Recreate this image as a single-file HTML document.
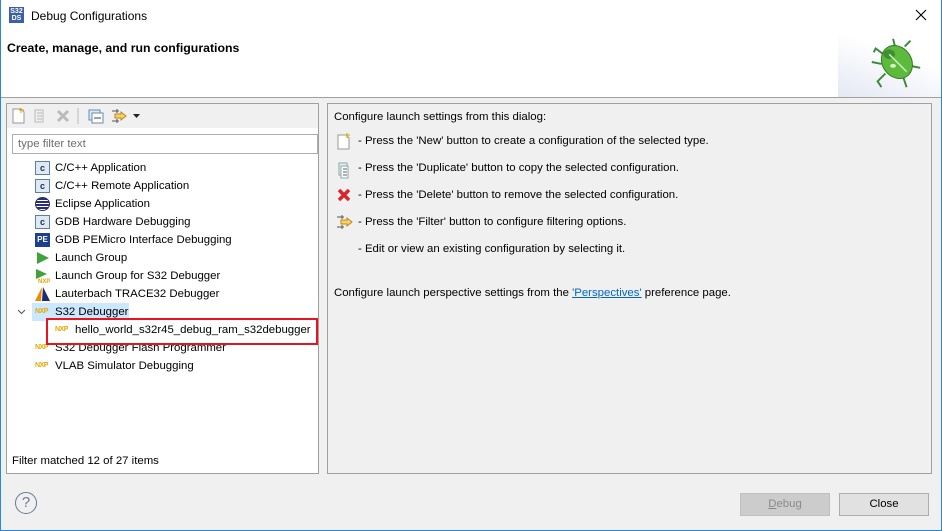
<!DOCTYPE html>
<html><head><style>
*{margin:0;padding:0;box-sizing:border-box}
body{width:942px;height:531px;overflow:hidden;background:#f0f0f0;font-family:"Liberation Sans",sans-serif;font-size:11.4px;color:#000;position:relative}
.a{position:absolute}
.win{position:absolute;left:0;top:0;width:942px;height:531px;border:1px solid #2b88d8;border-top:none}
.row{position:absolute;left:35px;height:18px;line-height:18px;white-space:nowrap}
.row .ic{position:absolute;left:0;top:2px;width:15px;height:14px}
.row span{position:absolute;left:20px}
.cic{border:1px solid #5b7fa6;background:#dfe9f5;font-size:9px;line-height:12px;text-align:center;color:#234;font-weight:bold}
.nxp{font-size:7px;font-weight:bold;color:#e8a800;line-height:14px;letter-spacing:-0.5px}
.btn{position:absolute;height:23px;border:1px solid #adadad;background:#e1e1e1;text-align:center;line-height:21px}
.t{position:absolute;white-space:nowrap}
</style></head><body>
<div class="a" style="left:0;top:0;width:942px;height:97px;background:#fff"></div>
<div class="a" style="left:0;top:97px;width:942px;height:1px;background:#a0a0a0"></div>
<div class="a" style="left:838px;top:25px;width:104px;height:72px;background:linear-gradient(200deg,#fff 40%,#e4e8f3 100%)"></div>
<div class="a" style="left:9px;top:7px;width:15px;height:16px;background:#3c5fa8;color:#fff;font-size:7px;line-height:7px;font-weight:bold;text-align:center;padding-top:1px">S32<br>DS</div>
<div class="t" style="left:31px;top:9px;font-size:12px">Debug Configurations</div>
<svg class="a" style="left:915px;top:9px" width="12" height="12"><path d="M1 1l10 10M11 1L1 11" stroke="#000" stroke-width="1.1"/></svg>
<div class="t" style="left:7px;top:41px;font-weight:bold;font-size:12.3px">Create, manage, and run configurations</div>
<svg class="a" style="left:866px;top:33px" width="58" height="58" viewBox="0 0 60 60">
<g stroke="#3a8a3a" stroke-width="2" fill="none"><path d="M18 22 L10 16 L8 20"/><path d="M16 32 L6 30"/><path d="M20 42 L12 50 L16 56"/><path d="M30 14 L28 6"/><path d="M40 14 L46 8"/><path d="M46 34 L56 36"/><path d="M38 44 L42 56"/></g>
<ellipse cx="32" cy="30" rx="15" ry="18" transform="rotate(-35 32 30)" fill="#5dba3c" stroke="#2f7a2a"/>
<ellipse cx="24" cy="22" rx="6" ry="5" fill="#3d8f30"/>
<path d="M24 22 L42 40" stroke="#cfeec0" stroke-width="1.5"/>
<ellipse cx="28" cy="34" rx="3" ry="2" fill="#d8f0c8"/>
</svg>
<div class="a" style="left:6px;top:103px;width:313px;height:371px;background:#fff;border:1px solid #a0a0a0"></div>
<div class="a" style="left:7px;top:104px;width:311px;height:24px;background:#f0f0f0"></div>
<svg class="a" style="left:11px;top:107px" width="135" height="18">
<path d="M2 2h8l3 3v11H2z" fill="#fff" stroke="#999"/><path d="M10 1v5M8 3h5" stroke="#d9a400"/>
<path d="M24 3h8v12h-8z" fill="#eee" stroke="#bbb"/><path d="M26 6h5M26 9h5M26 12h5" stroke="#bbb"/>
<path d="M47 4l10 10M57 4L47 14" stroke="#bbb" stroke-width="3"/>
<path d="M67 1v16" stroke="#bbb"/>
<rect x="78" y="3" width="11" height="10" fill="#dce8f5" stroke="#6a8ab0"/><rect x="81" y="6" width="11" height="10" fill="#fff" stroke="#6a8ab0"/><path d="M83 11h7" stroke="#345"/>
<path d="M101 4h7M101 14h7M106 2v4M106 12v4" stroke="#556"/><path d="M104 7h6v-2l5 4-5 4v-2h-6z" fill="#f3d07a" stroke="#c08a00"/>
<path d="M122 7h7l-3.5 4z" fill="#222"/>
</svg>
<div class="a" style="left:12px;top:134px;width:306px;height:20px;border:1px solid #abadb3;background:#fff;color:#6d6d6d;padding-left:5px;line-height:18px">type filter text</div>
<div class="row" style="top:159px"><div class="ic cic">c</div><span>C/C++ Application</span></div>
<div class="row" style="top:177px"><div class="ic cic">c</div><span>C/C++ Remote Application</span></div>
<div class="row" style="top:195px"><div class="ic" style="border-radius:50%;background:repeating-linear-gradient(#2c2f6e 0 2px,#fff 2px 3px);border:1px solid #2c2f6e"></div><span>Eclipse Application</span></div>
<div class="row" style="top:213px"><div class="ic cic">c</div><span>GDB Hardware Debugging</span></div>
<div class="row" style="top:231px"><div class="ic" style="background:#1d3f8f;color:#fff;font-size:8px;font-weight:bold;text-align:center;line-height:13px">PE</div><span>GDB PEMicro Interface Debugging</span></div>
<div class="row" style="top:249px"><svg class="ic" viewBox="0 0 15 14"><path d="M2 1l12 6-12 6z" fill="#3fa23a"/></svg><span>Launch Group</span></div>
<div class="row" style="top:267px"><svg class="ic" viewBox="0 0 15 14"><path d="M1 0l11 5-11 5z" fill="#3fa23a"/><text x="3" y="14" font-size="6" fill="#e8a800" font-weight="bold">NXP</text></svg><span>Launch Group for S32 Debugger</span></div>
<div class="row" style="top:285px"><svg class="ic" viewBox="0 0 15 14"><path d="M7 0L0 14h6z" fill="#f08a00"/><path d="M8 0l7 14H7z" fill="#1c2a78"/></svg><span>Lauterbach TRACE32 Debugger</span></div>
<svg class="a" style="left:17px;top:309px" width="9" height="6"><path d="M1 1l3.5 3.5L8 1" stroke="#555" fill="none"/></svg>
<div class="a" style="left:32px;top:303px;width:97px;height:18px;background:#cce8ff"></div>
<div class="row" style="top:303px"><div class="ic nxp">NXP</div><span>S32 Debugger</span></div>
<div class="row" style="top:339px"><div class="ic nxp">NXP</div><span>S32 Debugger Flash Programmer</span></div>
<div class="row" style="top:357px"><div class="ic nxp">NXP</div><span>VLAB Simulator Debugging</span></div>
<div class="a" style="left:46px;top:318px;width:272px;height:27px;border:2px solid #e8141f;background:#fff"></div>
<div class="row" style="top:321px;left:55px"><div class="ic nxp">NXP</div><span>hello_world_s32r45_debug_ram_s32debugger</span></div>
<div class="t" style="left:12px;top:455px">Filter matched 12 of 27 items</div>
<div class="a" style="left:327px;top:103px;width:605px;height:371px;border:1px solid #a0a0a0"></div>
<div class="t" style="left:334px;top:111px">Configure launch settings from this dialog:</div>
<svg class="a" style="left:336px;top:133px" width="20" height="130">
<path d="M2 2h8l3 3v11H2z" fill="#fff" stroke="#999"/><path d="M11 0v5M9 2h5" stroke="#d9a400"/>
<path d="M3 30h8v12H3z" fill="#e8eef6" stroke="#8aa"/><path d="M5 33h7v12H5z" fill="#fff" stroke="#8aa"/><path d="M7 36h4M7 39h4M7 42h4" stroke="#567"/>
<path d="M3 57l10 10M13 57L3 67" stroke="#d9262c" stroke-width="3.5"/>
<path d="M1 84h7M1 94h7M6 82v4M6 92v4" stroke="#556"/><path d="M5 87h6v-2l5 4-5 4v-2H5z" fill="#f3d07a" stroke="#c08a00"/>
</svg>
<div class="t" style="left:358px;top:135px">- Press the 'New' button to create a configuration of the selected type.</div>
<div class="t" style="left:358px;top:162px">- Press the 'Duplicate' button to copy the selected configuration.</div>
<div class="t" style="left:358px;top:189px">- Press the 'Delete' button to remove the selected configuration.</div>
<div class="t" style="left:358px;top:216px">- Press the 'Filter' button to configure filtering options.</div>
<div class="t" style="left:358px;top:243px">- Edit or view an existing configuration by selecting it.</div>
<div class="t" style="left:334px;top:287px">Configure launch perspective settings from the <span style="color:#0066cc;text-decoration:underline">'Perspectives'</span> preference page.</div>
<div class="a" style="left:15px;top:492px;width:22px;height:22px;border:1.5px solid #6a7a95;border-radius:50%;text-align:center;line-height:19px;color:#6a7a95;font-size:15px">?</div>
<div class="btn" style="left:740px;top:493px;width:90px;color:#8a8a8a;background:#cccccc;border-color:#bfbfbf"><u>D</u>ebug</div>
<div class="btn" style="left:839px;top:493px;width:90px">Close</div>
<div class="win"></div>
</body></html>
